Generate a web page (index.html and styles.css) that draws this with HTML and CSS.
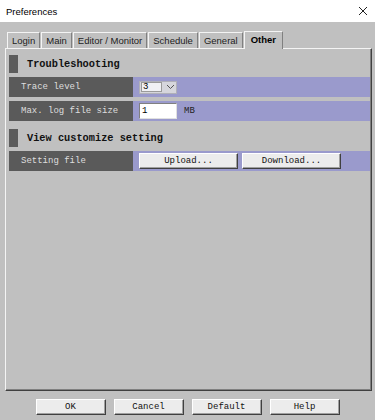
FILE: index.html
```html
<!DOCTYPE html>
<html lang="en">

<head>
    <title>Preferences</title>
    <link rel="stylesheet" href="styles.css">
</head>

<body>
    <div class="titlebar">
        <span class="title">Preferences</span>
        <svg class="close" width="10" height="10" viewBox="0 0 10 10">
            <path d="M1 1 L9 9 M9 1 L1 9" stroke="#222" stroke-width="1" fill="none" />
        </svg>
    </div>

    <div class="tabs">
        <div class="tab">Login</div>
        <div class="tab">Main</div>
        <div class="tab">Editor / Monitor</div>
        <div class="tab">Schedule</div>
        <div class="tab">General</div>
        <div class="tab active">Other</div>
    </div>

    <div class="panel">
        <div class="section-head">
            <span class="mark"></span>
            <span>Troubleshooting</span>
        </div>
        <div class="row">
            <div class="label">Trace level</div>
            <div class="value">
                <div class="select">
                    <span class="sel-text">3</span>
                    <svg class="chev" width="9" height="6" viewBox="0 0 9 6">
                        <path d="M1 1 L4.5 4.5 L8 1" stroke="#555" stroke-width="1" fill="none" />
                    </svg>
                </div>
            </div>
        </div>
        <div class="row">
            <div class="label">Max. log file size</div>
            <div class="value">
                <input class="field" type="text" value="1" />
                <span class="unit">MB</span>
            </div>
        </div>

        <div class="section-head second">
            <span class="mark"></span>
            <span>View customize setting</span>
        </div>
        <div class="row">
            <div class="label">Setting file</div>
            <div class="value">
                <button class="btn wide">Upload...</button>
                <button class="btn wide">Download...</button>
            </div>
        </div>
    </div>

    <div class="footer">
        <button class="btn">OK</button>
        <button class="btn">Cancel</button>
        <button class="btn">Default</button>
        <button class="btn">Help</button>
    </div>
</body>

</html>
```

FILE: styles.css
```css
* {
    box-sizing: border-box;
}

body {
    margin: 0;
    width: 375px;
    height: 420px;
    background: #c0c0c0;
    font-family: "Liberation Sans", Arial, sans-serif;
    overflow: hidden;
}

.titlebar {
    display: flex;
    align-items: center;
    justify-content: space-between;
    height: 22px;
    padding: 0 6px;
    background: #fff;
    font-size: 9.5px;
    color: #000;
}

.close {
    margin-right: 1px;
}

.tabs {
    display: flex;
    align-items: flex-end;
    gap: 1px;
    height: 26px;
    padding-left: 7px;

    & .tab {
        height: 16px;
        padding: 0 4px;
        display: flex;
        align-items: center;
        font-size: 9.5px;
        color: #222;
        border-top: 1px solid #f4f4f4;
        border-left: 1px solid #f4f4f4;
        border-right: 1px solid #808080;
    }

    & .active {
        height: 18px;
        margin-bottom: -1px;
        padding: 0 6px 2px;
        font-weight: bold;
        color: #000;
        background: #c0c0c0;
        position: relative;
    }
}

.panel {
    height: 343px;
    margin: 0 3px 0 5px;
    padding: 6px 1px 0 3px;
    border-top: 1px solid #f4f4f4;
    border-left: 1px solid #f4f4f4;
    border-right: 1px solid #404040;
    border-bottom: 1px solid #404040;
    box-shadow: inset -1px -1px 0 #808080;
}

.section-head {
    display: flex;
    align-items: center;
    gap: 9px;
    height: 18px;
    margin-bottom: 4px;
    font-family: "Liberation Mono", "Courier New", monospace;
    font-weight: bold;
    font-size: 10.3px;
    color: #111;

    & .mark {
        width: 9px;
        height: 18px;
        background: #5c5c5c;
    }
}

.second {
    margin-top: 8px;
}

.row {
    display: flex;
    height: 20px;
    margin-bottom: 4px;

    & .label {
        width: 124px;
        padding-left: 12px;
        display: flex;
        align-items: center;
        background: #5a5a5a;
        color: #dedede;
        font-family: "Liberation Mono", "Courier New", monospace;
        font-size: 9px;
    }

    & .value {
        flex: 1;
        display: flex;
        align-items: center;
        gap: 4px;
        padding-left: 6px;
        background: #9a9acc;
    }
}

.select {
    display: flex;
    align-items: center;
    width: 38px;
    height: 13px;
    padding: 1px;
    background: #d6d6dc;
    border: 1px solid #b0b0b8;

    & .sel-text {
        width: 21px;
        height: 10px;
        display: flex;
        align-items: center;
        padding-left: 1px;
        background: #f0f0f4;
        border: 1px solid #9a9a9a;
        font-family: "Liberation Mono", "Courier New", monospace;
        font-size: 9px;
        color: #000;
    }

    & .chev {
        margin-left: 4px;
    }
}

.field {
    width: 38px;
    height: 16px;
    margin: 0;
    padding: 0 2px;
    border: 1px solid #808080;
    border-right-color: #e0e0e0;
    border-bottom-color: #e0e0e0;
    background: #fff;
    outline: none;
    font-family: "Liberation Mono", "Courier New", monospace;
    font-size: 9px;
    color: #000;
}

.unit {
    margin-left: 3px;
    font-family: "Liberation Mono", "Courier New", monospace;
    font-size: 9px;
    color: #222;
}

.btn {
    width: 70px;
    height: 16px;
    margin: 0;
    padding: 0;
    background: #ececec;
    border: 1px solid #fff;
    border-right-color: #404040;
    border-bottom-color: #404040;
    box-shadow: inset -1px -1px 0 #a0a0a0;
    font-family: "Liberation Mono", "Courier New", monospace;
    font-size: 9px;
    color: #111;
}

.wide {
    width: 99px;
}

.footer {
    display: flex;
    justify-content: center;
    gap: 8px;
    margin-top: 8px;

    & .btn {
        height: 16px;
    }
}
```
